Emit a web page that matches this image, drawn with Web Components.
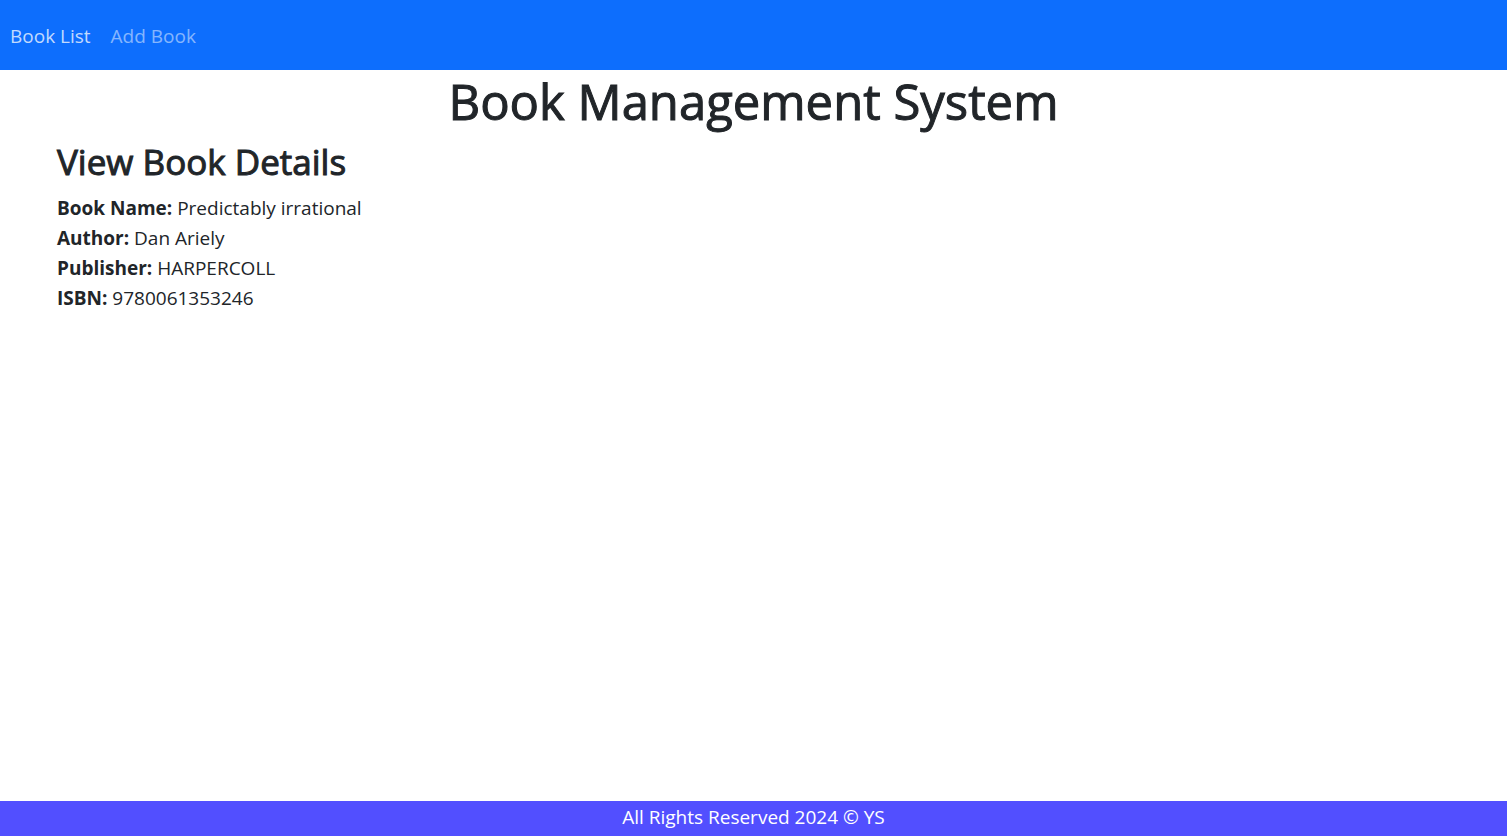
<!DOCTYPE html>
<html lang="en">
<head>
<meta charset="utf-8">
<meta name="viewport" content="width=device-width, initial-scale=1">
<title>Book Management System</title>
<style>
  body { margin: 0; background: #fff; color: #212529; font: 400 19px/30px "Open Sans", "Noto Sans", sans-serif; }
</style>
</head>
<body>
<book-app>
  <nav-bar slot="top">
    <nav-link href="#list" active>Book List</nav-link>
    <nav-link href="#add">Add Book</nav-link>
  </nav-bar>
  <page-title>Book Management System</page-title>
  <book-details>
    <span slot="heading">View Book Details</span>
    <book-field label="Book Name:">Predictably irrational</book-field>
    <book-field label="Author:">Dan Ariely</book-field>
    <book-field label="Publisher:">HARPERCOLL</book-field>
    <book-field label="ISBN:">9780061353246</book-field>
  </book-details>
  <page-footer slot="bottom">All Rights Reserved 2024 © YS</page-footer>
</book-app>
<script>
  const define = (name, html, setup) => {
    const template = document.createElement('template');
    template.innerHTML = html;
    customElements.define(name, class extends HTMLElement {
      connectedCallback() {
        if (this.shadowRoot) return;
        this.attachShadow({ mode: 'open' }).append(template.content.cloneNode(true));
        if (setup) setup(this, this.shadowRoot);
      }
    });
  };

  define('book-app', `
    <style>
      :host { display: flex; flex-direction: column; min-height: 100vh; }
      main { flex: 1; }
    </style>
    <slot name="top"></slot>
    <main><slot></slot></main>
    <slot name="bottom"></slot>`);

  define('nav-bar', `
    <style>
      :host { display: block; background: #0d6efd; }
      nav { display: flex; padding: 21px 0 19px; }
    </style>
    <nav><slot></slot></nav>`);

  define('nav-link', `
    <style>
      :host { display: block; }
      a { display: block; padding: 0 10px; color: rgba(255, 255, 255, .5); text-decoration: none; }
      :host([active]) a { color: rgba(255, 255, 255, .75); }
      a:hover { color: #fff; }
    </style>
    <a><slot></slot></a>`,
    (host, root) => { root.querySelector('a').href = host.getAttribute('href'); });

  define('page-title', `
    <style>
      :host { display: block; }
      h1 { margin: 0 0 9px; font-size: 49px; line-height: 62px; font-weight: 500; text-align: center; -webkit-text-stroke: 1px; }
    </style>
    <h1><slot></slot></h1>`);

  define('book-details', `
    <style>
      :host { display: block; padding: 0 57px; }
      h2 { margin: 0 0 10px; font-size: 35px; line-height: 42px; font-weight: 500; -webkit-text-stroke: 1px; }
    </style>
    <section>
      <h2><slot name="heading"></slot></h2>
      <slot></slot>
    </section>`);

  define('book-field', `
    <style>
      :host { display: block; }
      strong { font-weight: 700; }
    </style>
    <strong></strong> <slot></slot>`,
    (host, root) => { root.querySelector('strong').textContent = host.getAttribute('label'); });

  define('page-footer', `
    <style>
      :host { display: block; background: #524fff; color: #fff; }
      footer { padding: 1px 0 4px; text-align: center; }
    </style>
    <footer><slot></slot></footer>`);
</script>
</body>
</html>
